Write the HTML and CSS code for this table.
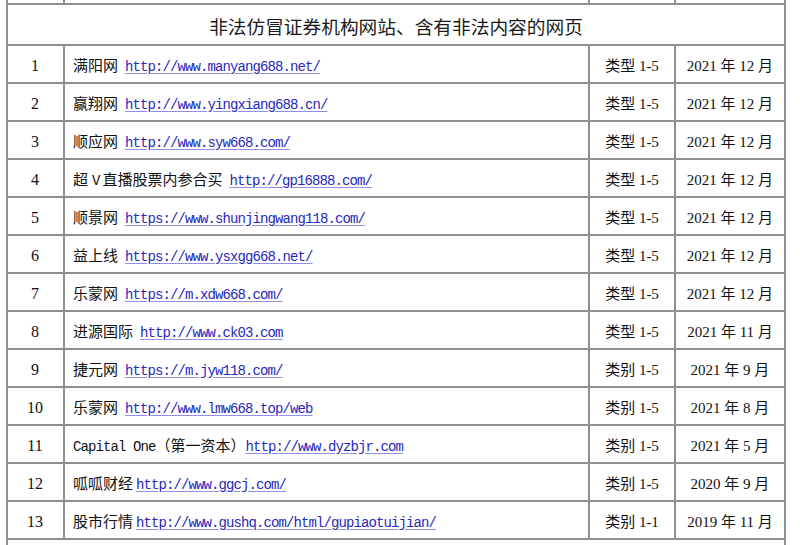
FILE: index.html
```html
<!DOCTYPE html>
<html lang="zh-CN">
<head>
<meta charset="utf-8">
<title>非法仿冒证券机构网站</title>
<link rel="stylesheet" href="styles.css">
</head>
<body>
<table class="list">
  <colgroup>
    <col class="c-num">
    <col class="c-site">
    <col class="c-type">
    <col class="c-date">
  </colgroup>
  <tr class="stub-top"><td></td><td></td><td></td><td></td></tr>
  <tr class="head"><td colspan="4">非法仿冒证券机构网站、含有非法内容的网页</td></tr>
  <tr><td class="num">1</td><td class="site">满阳网<span class="sp"> </span><a href="#">http://www.manyang688.net/</a></td><td class="type">类型 1-5</td><td class="date">2021 年 12 月</td></tr>
  <tr><td class="num">2</td><td class="site">赢翔网<span class="sp"> </span><a href="#">http://www.yingxiang688.cn/</a></td><td class="type">类型 1-5</td><td class="date">2021 年 12 月</td></tr>
  <tr><td class="num">3</td><td class="site">顺应网<span class="sp"> </span><a href="#">http://www.syw668.com/</a></td><td class="type">类型 1-5</td><td class="date">2021 年 12 月</td></tr>
  <tr><td class="num">4</td><td class="site">超<span class="lat v">V</span>直播股票内参合买<span class="sp"> </span><a href="#">http://gp16888.com/</a></td><td class="type">类型 1-5</td><td class="date">2021 年 12 月</td></tr>
  <tr><td class="num">5</td><td class="site">顺景网<span class="sp"> </span><a href="#">https://www.shunjingwang118.com/</a></td><td class="type">类型 1-5</td><td class="date">2021 年 12 月</td></tr>
  <tr><td class="num">6</td><td class="site">益上线<span class="sp"> </span><a href="#">https://www.ysxgg668.net/</a></td><td class="type">类型 1-5</td><td class="date">2021 年 12 月</td></tr>
  <tr><td class="num">7</td><td class="site">乐蒙网<span class="sp"> </span><a href="#">https://m.xdw668.com/</a></td><td class="type">类型 1-5</td><td class="date">2021 年 12 月</td></tr>
  <tr><td class="num">8</td><td class="site">进源国际<span class="sp"> </span><a href="#">http://www.ck03.com</a></td><td class="type">类型 1-5</td><td class="date">2021 年 11 月</td></tr>
  <tr><td class="num">9</td><td class="site">捷元网<span class="sp"> </span><a href="#">https://m.jyw118.com/</a></td><td class="type">类别 1-5</td><td class="date">2021 年 9 月</td></tr>
  <tr><td class="num">10</td><td class="site">乐蒙网<span class="sp"> </span><a href="#">http://www.lmw668.top/web</a></td><td class="type">类别 1-5</td><td class="date">2021 年 8 月</td></tr>
  <tr><td class="num">11</td><td class="site"><span class="lat">Capital One</span>（第一资本）<a href="#">http://www.dyzbjr.com</a></td><td class="type">类别 1-5</td><td class="date">2021 年 5 月</td></tr>
  <tr><td class="num">12</td><td class="site">呱呱财经<span class="gap"></span><a href="#">http://www.ggcj.com/</a></td><td class="type">类别 1-5</td><td class="date">2020 年 9 月</td></tr>
  <tr><td class="num">13</td><td class="site">股市行情<span class="gap"></span><a href="#">http://www.gushq.com/html/gupiaotuijian/</a></td><td class="type">类别 1-1</td><td class="date">2019 年 11 月</td></tr>
  <tr class="stub-bottom"><td colspan="4"></td></tr>
</table>
</body>
</html>
```
FILE: styles.css
```css
html, body {
  margin: 0;
  padding: 0;
  background: #ffffff;
}

body {
  font-family: "Liberation Serif", "Noto Sans CJK SC", serif;
  font-size: 15px;
  color: #111111;
}

.list {
  border-collapse: separate;
  border-spacing: 0;
  table-layout: fixed;
  width: 780px;
  margin-left: 6px;
  border-left: 2px solid #8e8e8e;
}

.c-num { width: 57px; }
.c-site { width: 525px; }
.c-type { width: 86px; }
.c-date { width: 110px; }

.list td {
  box-sizing: border-box;
  border-right: 2px solid #8e8e8e;
  border-bottom: 2px solid #8e8e8e;
  padding: 0;
  vertical-align: middle;
  white-space: nowrap;
  overflow: hidden;
}

.list tr { height: 38px; }

.list tr.stub-top { height: 5px; }
.list tr.stub-top td { height: 5px; }

.list tr.head { height: 41px; }
.list tr.head td {
  text-align: center;
  font-family: "Noto Sans CJK SC", sans-serif;
  font-size: 18.7px;
  color: #1a1a1a;
  padding-top: 1px;
}

.list tr.stub-bottom { height: 10px; }
.list tr.stub-bottom td { border-bottom: none; }

.list td.num {
  text-align: center;
  font-size: 16px;
  padding: 3px 1px 0 0;
}

.list td.site {
  padding-left: 8px;
  font-family: "Noto Sans CJK SC", sans-serif;
}

.site .lat,
.site .sp,
.site a {
  font-family: "Liberation Mono", monospace;
  font-size: 14px;
  letter-spacing: -0.9px;
}

.site .sp {
  display: inline-block;
  width: 7px;
}

.site .v {
  display: inline-block;
  padding: 0 3px 0 4px;
}

.site .gap {
  display: inline-block;
  width: 3px;
}

.site a {
  color: #2828bb;
  text-decoration: underline;
  text-decoration-color: #9090e2;
  text-underline-offset: 2px;
}

.list td.type,
.list td.date {
  text-align: center;
  padding-top: 1px;
}
```
